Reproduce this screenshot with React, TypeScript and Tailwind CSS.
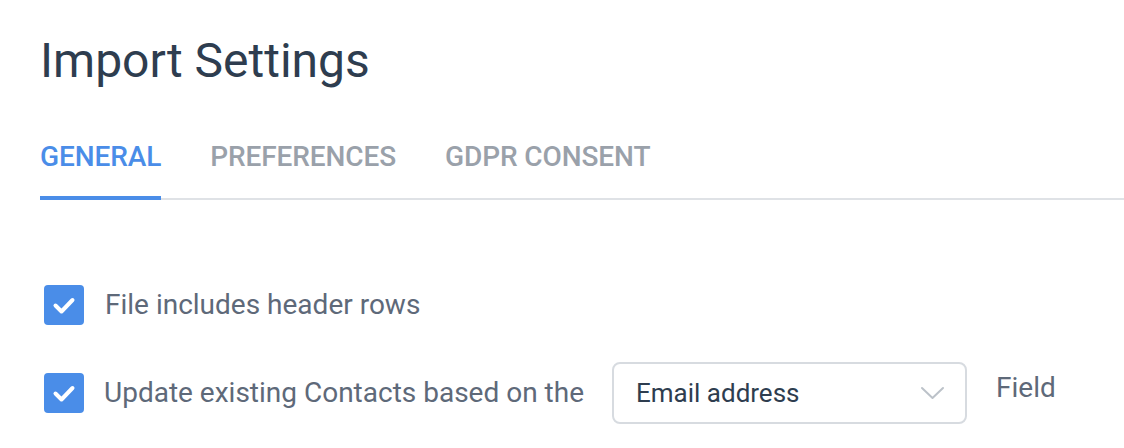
import { useState } from 'react'

const TABS = ['GENERAL', 'PREFERENCES', 'GDPR CONSENT']

function cx(...classes: Array<string | false | undefined | null>) {
  return classes.filter(Boolean).join(' ')
}

function Check({ checked, onToggle }: { checked: boolean; onToggle: () => void }) {
  return (
    <button
      onClick={onToggle}
      className={cx(
        'flex h-10 w-10 shrink-0 items-center justify-center rounded-[4px]',
        checked ? 'bg-[#4a8de8]' : 'border-2 border-[#cfd4da] bg-white'
      )}
    >
      {checked && (
        <svg width="40" height="40" viewBox="0 0 40 40" fill="none">
          <path d="M11.5 20.5l6 6L28.5 15" stroke="white" strokeWidth="4" strokeLinecap="round" strokeLinejoin="round" />
        </svg>
      )}
    </button>
  )
}

export default function App() {
  const [tab, setTab] = useState('GENERAL')
  const [headerRows, setHeaderRows] = useState(true)
  const [update, setUpdate] = useState(true)

  return (
    <div className="h-[448px] w-[1124px] overflow-hidden bg-white pl-10 font-['Roboto',sans-serif]">
      <h1 className="pt-[37px] text-[48px] leading-none text-[#2e3d4f]">Import Settings</h1>

      {/* Tabs */}
      <div className="mt-[58px] flex gap-[49px] border-b-2 border-[#dfe2e6]">
        {TABS.map((t) => (
          <button
            key={t}
            onClick={() => setTab(t)}
            className={cx(
              '-mb-[2px] border-b-4 pb-[25px] text-[28px] font-medium leading-[28px] tracking-[-0.1px]',
              tab === t ? 'border-[#4a8de8] text-[#4a8de8]' : 'border-transparent text-[#9aa1aa]'
            )}
          >
            {t}
          </button>
        ))}
      </div>

      {/* Options */}
      <div className="mt-[84px] flex flex-col">
        <label className="flex items-center gap-[21px] pl-1">
          <Check checked={headerRows} onToggle={() => setHeaderRows(!headerRows)} />
          <span className="text-[28px] text-[#5e6979]">File includes header rows</span>
        </label>

        <div className="mt-[36px] flex items-center pl-1">
          <Check checked={update} onToggle={() => setUpdate(!update)} />
          <span className="ml-[20px] text-[28px] text-[#5e6979]">Update existing Contacts based on the</span>
          <div className="ml-[28px] flex h-[62px] w-[355px] items-center justify-between rounded-[8px] border-2 border-[#d7dbe0] pl-[22px] pr-[20px]">
            <span className="text-[26px] text-[#2e3d4f]">Email address</span>
            <svg width="25" height="14" viewBox="0 0 25 14" fill="none">
              <path d="M2 2l10.5 10L23 2" stroke="#bcc2c9" strokeWidth="2" strokeLinecap="round" strokeLinejoin="round" />
            </svg>
          </div>
          <span className="ml-[29px] -mt-[10px] text-[28px] text-[#5e6979]">Field</span>
        </div>
      </div>
    </div>
  )
}
